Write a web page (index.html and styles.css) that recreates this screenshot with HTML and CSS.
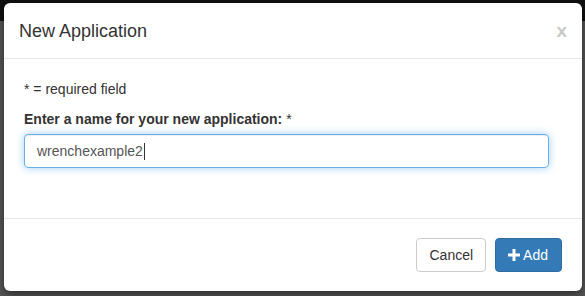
FILE: index.html
```html
<!DOCTYPE html>
<html lang="en">
<head>
    <meta charset="UTF-8">
    <meta name="viewport" content="width=device-width, initial-scale=1.0">
    <title>New Application</title>
    <link rel="stylesheet" href="styles.css">
</head>
<body>
    <div class="backdrop">
        <div class="modal">
            <div class="modal-header">
                <h4 class="modal-title">New Application</h4>
                <span class="close">x</span>
            </div>
            <div class="modal-body">
                <p class="hint">* = required field</p>
                <label class="field-label">Enter a name for your new application: <span class="req">*</span></label>
                <div class="text-input">wrenchexample2<span class="caret"></span></div>
            </div>
            <div class="modal-footer">
                <button class="btn btn-default">Cancel</button>
                <button class="btn btn-primary">
                    <svg class="plus" width="12" height="12" viewBox="0 0 12 12">
                        <path d="M4.5 0h3v4.5H12v3H7.5V12h-3V7.5H0v-3h4.5z" fill="#fff"/>
                    </svg>Add
                </button>
            </div>
        </div>
    </div>
</body>
</html>
```

FILE: styles.css
```css
body {
    margin: 0;
    height: 296px;
    overflow: hidden;
    font-family: "Liberation Sans", Arial, sans-serif;
    font-size: 14px;
    line-height: 20px;
    color: #333;
    background: linear-gradient(to bottom, #101010 0, #101010 21px, #555 21px, #555 100%);
}

.backdrop {
    padding: 3px 3px 0 4px;
}

.modal {
    width: 578px;
    background: #fff;
    border-radius: 6px;
    box-shadow: 0 3px 9px rgba(0, 0, 0, 0.5);
    display: flex;
    flex-direction: column;
}

.modal-header {
    display: flex;
    align-items: center;
    justify-content: space-between;
    padding: 15px 15px 14px 15px;
    border-bottom: 1px solid #e5e5e5;
}

.modal-title {
    margin: 0;
    font-size: 18px;
    font-weight: normal;
    line-height: 26px;
    color: #333;
}

.close {
    font-size: 19px;
    font-weight: bold;
    color: #c8c8c8;
    line-height: 20px;
    margin-top: -1px;
}

.modal-body {
    padding: 20px 33px 0 20px;
    height: 159px;
    box-sizing: border-box;
}

.hint {
    margin: 0 0 10px 0;
}

.field-label {
    display: block;
    font-weight: bold;
    margin-bottom: 5px;
}

.req {
    font-weight: normal;
}

.text-input {
    height: 32px;
    border: 1px solid #66afe9;
    border-radius: 4px;
    padding: 0 12px;
    line-height: 32px;
    color: #555;
    box-shadow: inset 0 1px 1px rgba(0, 0, 0, 0.075), 0 0 8px rgba(102, 175, 233, 0.6);
    display: flex;
    align-items: center;
}

.caret {
    display: inline-block;
    width: 1px;
    height: 17px;
    background: #333;
    margin-left: 1px;
}

.modal-footer {
    border-top: 1px solid #e5e5e5;
    padding: 19px 20px 19px 20px;
    display: flex;
    justify-content: flex-end;
    gap: 9px;
}

.btn {
    font-family: "Liberation Sans", Arial, sans-serif;
    font-size: 14px;
    line-height: 20px;
    height: 34px;
    padding: 6px 12px;
    border-radius: 4px;
    border: 1px solid #ccc;
    cursor: pointer;
    display: flex;
    align-items: center;
}

.btn-default {
    background: #fff;
    color: #333;
}

.btn-primary {
    background: #337ab7;
    border-color: #2e6da4;
    color: #fff;
    padding: 6px 13px 6px 12px;
}

.plus {
    margin-right: 3px;
}
```
